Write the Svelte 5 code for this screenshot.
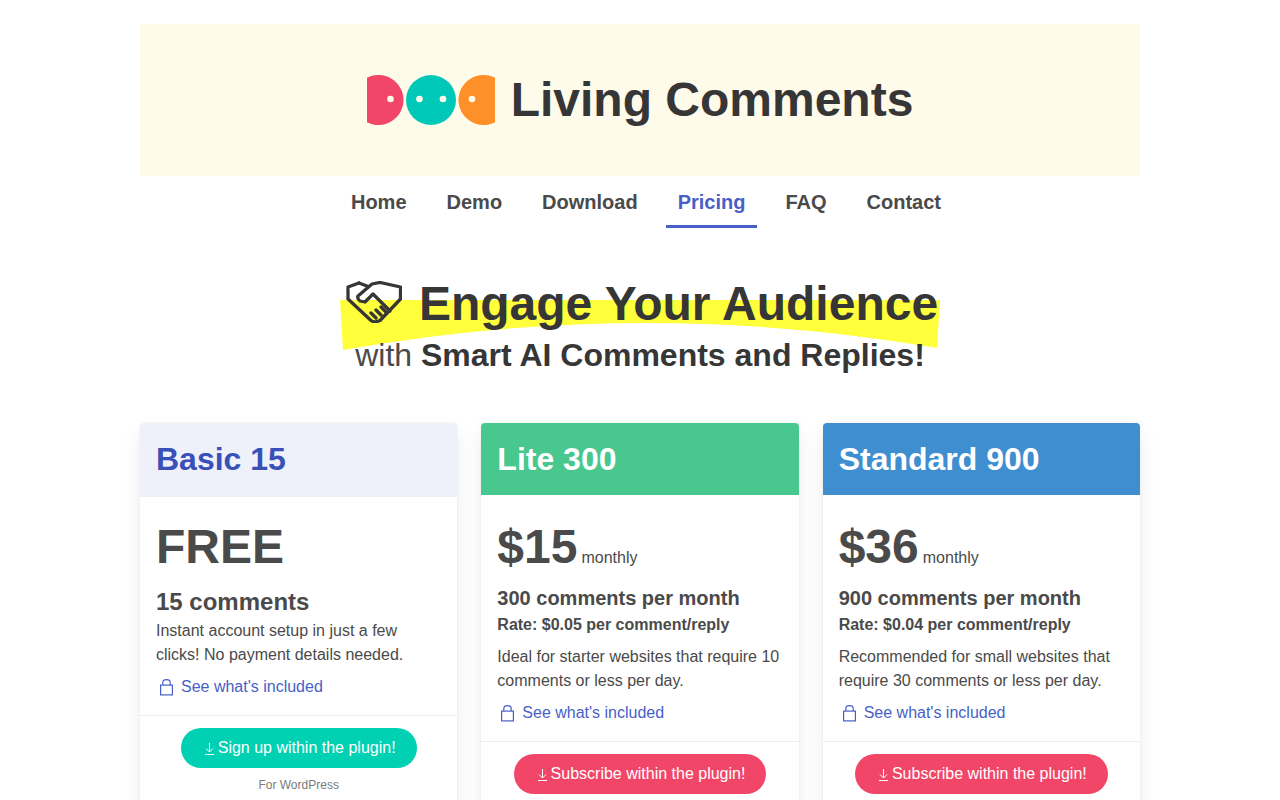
<script>
	const plans = [
		{
			name: 'Basic 15',
			tone: 'basic',
			price: 'FREE',
			period: '',
			comments: '15 comments',
			rate: '',
			blurb: 'Instant account setup in just a few clicks! No payment details needed.',
			action: 'Sign up within the plugin!'
		},
		{
			name: 'Lite 300',
			tone: 'lite',
			price: '$15',
			period: 'monthly',
			comments: '300 comments per month',
			rate: 'Rate: $0.05 per comment/reply',
			blurb: 'Ideal for starter websites that require 10 comments or less per day.',
			action: 'Subscribe within the plugin!'
		},
		{
			name: 'Standard 900',
			tone: 'standard',
			price: '$36',
			period: 'monthly',
			comments: '900 comments per month',
			rate: 'Rate: $0.04 per comment/reply',
			blurb: 'Recommended for small websites that require 30 comments or less per day.',
			action: 'Subscribe within the plugin!'
		}
	];
	const links = ['Home', 'Demo', 'Download', 'Pricing', 'FAQ', 'Contact'];
</script>

<div class="page">
	<header class="hero">
		<svg class="logo" width="128" height="50" viewBox="0 0 128 50" aria-hidden="true">
			<path d="M0 2.8A25 25 0 1 1 0 47.2Z" fill="#f14668" />
			<circle cx="64" cy="25" r="25" fill="#00c8b8" />
			<path d="M128 2.8A25 25 0 1 0 128 47.2Z" fill="#ff9029" />
			<circle cx="23.5" cy="24" r="3.3" fill="#fffbeb" />
			<circle cx="52.5" cy="24" r="3.3" fill="#fffbeb" />
			<circle cx="76" cy="24" r="3.3" fill="#fffbeb" />
			<circle cx="105" cy="24" r="3.3" fill="#fffbeb" />
		</svg>
		<h1>Living Comments</h1>
	</header>

	<nav>
		{#each links as link}
			<a href="#top" class:active={link === 'Pricing'}>{link}</a>
		{/each}
	</nav>

	<section class="headline">
		<svg class="swoosh" width="600" height="50" viewBox="0 0 600 50" aria-hidden="true">
			<path d="M0 0H600L597 48Q300 -3 3 50Z" fill="#ffff3c" />
		</svg>
		<h2>
			<svg class="shake" width="56" height="42" viewBox="0 0 56 42" fill="none" stroke="#363636" stroke-width="3.3" stroke-linejoin="round" stroke-linecap="round" aria-hidden="true">
				<path d="M13 2 2 6V18L25 39.5Q28 41.5 31 40.5L34 39.5 54.5 18V6L34 1.5 26 3 12 15Q11 18 14 20L19 21 27 13 44 30" />
				<path d="M13 2 21 5M25 32 30 37M30 29 35 34M35 26 40 31" />
			</svg>
			<span>Engage Your Audience</span>
		</h2>
		<p>with <strong>Smart AI Comments and Replies!</strong></p>
	</section>

	<section class="plans">
		{#each plans as plan}
			<article class="plan">
				<div class="plan-head {plan.tone}">{plan.name}</div>
				<div class="plan-body" class:free={!plan.rate}>
					<div class="price">{plan.price}{#if plan.period}<small>monthly</small>{/if}</div>
					<div class="count" class:big={!plan.rate}>{plan.comments}</div>
					{#if plan.rate}
						<div class="rate">{plan.rate}</div>
					{/if}
					<p class="blurb" class:tight={!plan.rate}>{plan.blurb}</p>
					<a class="more" href="#top">
						<svg width="13" height="17" viewBox="0 0 13 17" fill="none" stroke="#485fc7" stroke-width="1.2" aria-hidden="true">
							<rect x=".6" y="6.1" width="11.8" height="9.8" />
							<path d="M2.8 6V3.4C2.8 1.5 4.4.6 6.5.6S10.2 1.5 10.2 3.4V6" />
						</svg>
						See what's included
					</a>
				</div>
				<div class="plan-foot">
					<a class="cta" class:free={!plan.rate} href="#top">
						<svg width="9" height="13" viewBox="0 0 9 13" fill="none" stroke="#fff" stroke-width="1" aria-hidden="true">
							<path d="M4.5 1V10M1 6.5 4.5 10 8 6.5M0 12.5H9" />
						</svg>
						{plan.action}
					</a>
					<div class="note">For WordPress</div>
				</div>
			</article>
		{/each}
	</section>
</div>

<style>
	:global(body) {
		font-family: 'Liberation Sans', Arial, sans-serif;
		font-size: 16px;
		color: #4a4a4a;
		background: #fff;
	}

	.page {
		width: 1000px;
		margin: 0 auto;
		padding-top: 24px;
		padding-bottom: 40px;
	}

	.hero {
		height: 152px;
		background: #fffbeb;
		display: flex;
		align-items: center;
		justify-content: center;
		gap: 16px;
	}

	h1 {
		margin: 0;
		font-size: 48px;
		line-height: 1.125;
		font-weight: 700;
		color: #363636;
	}

	nav {
		display: flex;
		justify-content: center;
		padding-left: 12px;
		gap: 16px;
	}

	nav a {
		padding: 14px 12px 11px;
		font-size: 20px;
		line-height: 24px;
		font-weight: 700;
		color: #4a4a4a;
		text-decoration: none;
		border-bottom: 3px solid transparent;
	}

	nav a.active {
		color: #485fc7;
		border-bottom-color: #485fc7;
	}

	.headline {
		position: relative;
		margin-top: 48px;
		text-align: center;
	}

	.swoosh {
		position: absolute;
		left: 200px;
		top: 24px;
	}

	h2 {
		position: relative;
		display: flex;
		justify-content: center;
		align-items: center;
		gap: 17px;
		margin: 0;
		padding-left: 4px;
		font-size: 48px;
		line-height: 55px;
		font-weight: 700;
		color: #363636;
	}

	.shake {
		margin-top: -3px;
	}

	.headline p {
		position: relative;
		margin: 0;
		font-size: 32px;
		line-height: 48px;
	}

	.headline strong {
		color: #363636;
	}

	.plans {
		display: grid;
		grid-template-columns: repeat(3, 1fr);
		gap: 24px;
		margin-top: 44px;
	}

	.plan {
		background: #fff;
		border-radius: 4px;
		box-shadow: 0 8px 20px -2px rgba(10, 10, 10, 0.1), 0 0 0 1px rgba(10, 10, 10, 0.02);
	}

	.plan-head {
		padding: 16px;
		font-size: 32px;
		line-height: 40px;
		font-weight: 700;
		color: #fff;
		border-radius: 4px 4px 0 0;
	}

	.basic {
		padding-bottom: 18px;
		background: #eff1fa;
		color: #3850b7;
	}

	.lite {
		background: #48c78e;
	}

	.standard {
		background: #3e8ed0;
	}

	.plan-body {
		padding: 24px 16px 16px;
	}

	.plan-body.free {
		padding-top: 22px;
	}

	.price {
		font-size: 48px;
		line-height: 56px;
		font-weight: 700;
	}

	.price small {
		margin-left: 4px;
		font-size: 16px;
		font-weight: 400;
	}

	.count {
		margin-top: -3px;
		font-size: 20px;
		line-height: 30px;
		font-weight: 700;
	}

	.count.big {
		margin-top: 12px;
		margin-bottom: 2px;
		font-size: 24px;
	}

	.rate {
		font-weight: 700;
		line-height: 24px;
	}

	.blurb {
		margin: 8px 0;
		line-height: 24px;
	}

	.blurb.tight {
		margin-top: 0;
	}

	.more {
		display: flex;
		align-items: center;
		gap: 8px;
		padding-left: 4px;
		line-height: 24px;
		color: #485fc7;
		text-decoration: none;
	}

	.plan-foot {
		padding: 12px 16px;
		border-top: 1px solid #ededed;
		text-align: center;
	}

	.cta {
		display: inline-flex;
		align-items: center;
		gap: 4px;
		height: 40px;
		padding: 0 21px 0 24px;
		border-radius: 20px;
		background: #f14668;
		color: #fff;
		text-decoration: none;
	}

	.cta.free {
		background: #00d1b2;
	}

	.note {
		margin-top: 8px;
		font-size: 12px;
		line-height: 18px;
		color: #7a7a7a;
	}
</style>
